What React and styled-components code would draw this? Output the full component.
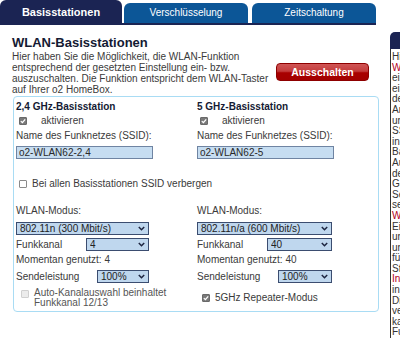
import React from 'react';
import styled, { createGlobalStyle } from 'styled-components';

const GlobalStyle = createGlobalStyle`
  html, body {
    margin: 0;
    padding: 0;
    background: #ffffff;
    overflow: hidden;
  }
  body {
    font-family: "Liberation Sans", Arial, sans-serif;
    font-size: 10px;
    color: #3a3a3a;
  }
`;

const Page = styled.div`
  display: flex;
  width: 400px;
  height: 338px;
  overflow: hidden;
`;

const Main = styled.div`
  width: 380px;
  flex-shrink: 0;
`;

const TabBar = styled.div`
  display: flex;
  align-items: flex-end;
  height: 23px;
  width: 376px;
  border-bottom: 2px solid #1b2453;
`;

const Tab = styled.div`
  width: ${p => p.$w}px;
  margin-right: ${p => p.$gap || 0}px;
  height: ${p => (p.$active ? 23 : 20)}px;
  box-sizing: border-box;
  border-radius: 6px 6px 0 0;
  background: ${p => (p.$active ? '#1b2453' : '#0c5697')};
  color: #ffffff;
  font-size: ${p => (p.$active ? 11 : 10)}px;
  font-weight: ${p => (p.$active ? 700 : 400)};
  display: flex;
  align-items: center;
  justify-content: center;
  padding-bottom: ${p => (p.$active ? 0 : 1)}px;
`;

const Content = styled.div`
  padding-left: 12px;
`;

const Heading = styled.h1`
  margin: 10px 0 0;
  font-size: 13px;
  line-height: 15px;
  font-weight: 700;
  color: #141a33;
`;

const IntroRow = styled.div`
  display: flex;
  align-items: flex-start;
`;

const Intro = styled.p`
  margin: 1px 0 0;
  width: 264px;
  line-height: 11px;
  color: #3a3a3a;
`;

const RedButton = styled.button`
  margin-top: 13px;
  width: 93px;
  height: 18px;
  border: 1px solid #8e0000;
  border-radius: 4px;
  background: linear-gradient(#cf5555 0%, #c43c3c 45%, #a80000 55%, #a40000 100%);
  color: #ffffff;
  font-family: "Liberation Sans", Arial, sans-serif;
  font-size: 10.5px;
  font-weight: 700;
  padding: 0;
`;

const Box = styled.div`
  margin: 1px 0 0 1px;
  width: 366px;
  box-sizing: border-box;
  border: 1px solid #a9dcf4;
  border-radius: 4px;
  padding: 4px 0 3px 2px;
`;

const Grid = styled.div`
  display: grid;
  grid-template-columns: 181px 181px;
`;

const Column = styled.div`
  display: flex;
  flex-direction: column;
`;

const SectionTitle = styled.div`
  font-weight: 700;
  line-height: 12px;
  color: #141a33;
`;

const Label = styled.div`
  line-height: 12px;
  margin-top: ${p => p.$mt || 0}px;
`;

const CheckRow = styled.label`
  display: flex;
  align-items: ${p => (p.$top ? 'flex-start' : 'center')};
  margin-top: ${p => p.$mt || 0}px;
  padding-left: ${p => p.$pl || 3}px;
  line-height: ${p => p.$lh || 12}px;
  color: ${p => (p.$disabled ? '#555555' : '#3a3a3a')};
`;

const Check = styled.span`
  width: 8px;
  height: 8px;
  flex-shrink: 0;
  box-sizing: border-box;
  border-radius: 1px;
  margin-right: ${p => p.$gap}px;
  margin-top: ${p => (p.$top ? 2 : 0)}px;
  display: flex;
  align-items: center;
  justify-content: center;
  background: ${p => (p.$checked ? '#7a7a7a' : p.$disabled ? '#ececec' : '#ffffff')};
  border: 1px solid ${p => (p.$checked ? '#6a6a6a' : p.$disabled ? '#d0d0d0' : '#8a8a8a')};
`;

const TextInput = styled.input`
  margin-top: 4px;
  width: 137px;
  height: 13px;
  box-sizing: border-box;
  border: 1px solid #6f84a2;
  background: #c6ddf1;
  padding: 0 2px;
  font-family: "Liberation Sans", Arial, sans-serif;
  font-size: 10px;
  color: #2a2a2a;
  outline: none;
`;

const FieldRow = styled.div`
  display: flex;
  align-items: center;
  margin-top: ${p => p.$mt || 0}px;
  height: 13px;
`;

const FieldLabel = styled.div`
  width: ${p => p.$w}px;
  flex-shrink: 0;
  line-height: 12px;
`;

const SelectWrap = styled.div`
  position: relative;
  width: ${p => p.$w}px;
  height: 13px;
  margin-top: ${p => p.$mt || 0}px;
`;

const Select = styled.select`
  appearance: none;
  -webkit-appearance: none;
  width: 100%;
  height: 13px;
  box-sizing: border-box;
  border: 1px solid #3b4d70;
  background: #bfd7ee;
  padding: 0 0 0 3px;
  margin: 0;
  font-family: "Liberation Sans", Arial, sans-serif;
  font-size: 10px;
  line-height: 11px;
  color: #222222;
  outline: none;
  display: block;
`;

const Chevron = styled.svg`
  position: absolute;
  right: 4px;
  top: 4px;
  pointer-events: none;
`;

const Side = styled.div`
  margin: 32px 0 0 10px;
  width: 160px;
  flex-shrink: 0;
`;

const SideHead = styled.div`
  height: 17px;
  background: #1b2453;
  border-radius: 5px 0 0 0;
`;

const SideBody = styled.div`
  border-left: 1px solid #333333;
  padding: 3px 0 0 1px;
  height: 300px;
`;

const SideLine = styled.div`
  line-height: 10.6px;
  white-space: nowrap;
  color: ${p => (p.$red ? '#b3001b' : '#333333')};
`;

const Tick = () => (
  <svg width="6" height="6" viewBox="0 0 6 6">
    <path d="M0.8 3.1 L2.4 4.6 L5.2 1.3" fill="none" stroke="#ffffff" strokeWidth="1.3" />
  </svg>
);

const CheckBox = ({ checked, disabled, gap, top, children, ...rest }) => (
  <CheckRow $disabled={disabled} $top={top} {...rest}>
    <Check $checked={checked} $disabled={disabled} $gap={gap} $top={top}>
      {checked && <Tick />}
    </Check>
    <span>{children}</span>
  </CheckRow>
);

const Dropdown = ({ w, mt, value, options }) => (
  <SelectWrap $w={w} $mt={mt}>
    <Select defaultValue={value}>
      {options.map(o => (
        <option key={o}>{o}</option>
      ))}
    </Select>
    <Chevron width="7" height="5" viewBox="0 0 7 5">
      <path d="M0.8 0.9 L3.5 3.7 L6.2 0.9" fill="none" stroke="#1d2540" strokeWidth="1.5" />
    </Chevron>
  </SelectWrap>
);

const sideLines = [
  ['Hier können Sie die'],
  ['WLAN-Funktion', true],
  ['einzeln für beide'],
  ['eingebauten Funk-'],
  ['der HomeBox'],
  ['An- und Abschalten'],
  ['und die Einstellung'],
  ['SSID festlegen'],
  ['in der Liste'],
  ['Basisstationen'],
  ['Auswahl des Modus'],
  ['des Funkkanals'],
  ['Geräte im Netz'],
  ['Sendeleistung'],
  ['senden mit'],
  ['WLAN-Modus', true],
  ['Einstellung'],
  ['und'],
  ['und Kanal'],
  ['für beide'],
  ['Standards'],
  ['Information', true],
  ['in der Hilfe'],
  ['Die Kanäle'],
  ['verwenden'],
  ['kann'],
  ['Funkkanal'],
];

const Station = ({ title, ssid }) => (
  <Column>
    <SectionTitle>{title}</SectionTitle>
    <CheckBox checked gap={14} $mt={2} $pl={3}>aktivieren</CheckBox>
    <Label $mt={3}>Name des Funknetzes (SSID):</Label>
    <TextInput defaultValue={ssid} />
  </Column>
);

const Radio = ({ mode, modes, channel, channels, offsets }) => (
  <Column>
    <Label>WLAN-Modus:</Label>
    <Dropdown w={offsets.mode} mt={5} value={mode} options={modes} />
    <FieldRow $mt={3}>
      <FieldLabel $w={offsets.chanLabel}>Funkkanal</FieldLabel>
      <Dropdown w={offsets.chan} value={channel} options={channels} />
    </FieldRow>
    <Label $mt={3}>Momentan genutzt: {channel}</Label>
    <FieldRow $mt={4}>
      <FieldLabel $w={offsets.powerLabel}>Sendeleistung</FieldLabel>
      <Dropdown w={offsets.power} value="100%" options={['100%', '75%', '50%', '25%']} />
    </FieldRow>
  </Column>
);

export default function App() {
  return (
    <Page>
      <GlobalStyle />
      <Main>
        <TabBar>
          <Tab $active $w={122} $gap={2}>Basisstationen</Tab>
          <Tab $w={124} $gap={4}>Verschlüsselung</Tab>
          <Tab $w={124}>Zeitschaltung</Tab>
        </TabBar>
        <Content>
          <Heading>WLAN-Basisstationen</Heading>
          <IntroRow>
            <Intro>
              Hier haben Sie die Möglichkeit, die WLAN-Funktion<br />
              entsprechend der gesetzten Einstellung ein- bzw.<br />
              auszuschalten. Die Funktion entspricht dem WLAN-Taster<br />
              auf Ihrer o2 HomeBox.
            </Intro>
            <RedButton type="button">Ausschalten</RedButton>
          </IntroRow>
          <Box>
            <Grid>
              <Station title="2,4 GHz-Basisstation" ssid="o2-WLAN62-2,4" />
              <Station title="5 GHz-Basisstation" ssid="o2-WLAN62-5" />
            </Grid>
            <CheckBox gap={5} $mt={19} $pl={3}>Bei allen Basisstationen SSID verbergen</CheckBox>
            <Grid style={{ marginTop: 15 }}>
              <Radio
                mode="802.11n (300 Mbit/s)"
                modes={['802.11n (300 Mbit/s)', '802.11g (54 Mbit/s)', '802.11b (11 Mbit/s)']}
                channel="4"
                channels={['Auto', '1', '2', '3', '4', '5', '6', '7', '8', '9', '10', '11', '12', '13']}
                offsets={{ mode: 133, chanLabel: 70, chan: 63, powerLabel: 81, power: 52 }}
              />
              <Radio
                mode="802.11n/a (600 Mbit/s)"
                modes={['802.11n/a (600 Mbit/s)', '802.11a (54 Mbit/s)']}
                channel="40"
                channels={['Auto', '36', '40', '44', '48']}
                offsets={{ mode: 135, chanLabel: 70, chan: 65, powerLabel: 81, power: 54 }}
              />
            </Grid>
            <Grid>
              <CheckBox disabled top gap={5} $mt={5} $pl={5} $lh={10}>
                Auto-Kanalauswahl beinhaltet<br />Funkkanal 12/13
              </CheckBox>
              <CheckBox checked gap={5} $mt={9} $pl={5} style={{ alignSelf: 'start' }}>
                5GHz Repeater-Modus
              </CheckBox>
            </Grid>
          </Box>
        </Content>
      </Main>
      <Side>
        <SideHead />
        <SideBody>
          {sideLines.map(([t, red], i) => (
            <SideLine key={i} $red={red}>{t}</SideLine>
          ))}
        </SideBody>
      </Side>
    </Page>
  );
}
